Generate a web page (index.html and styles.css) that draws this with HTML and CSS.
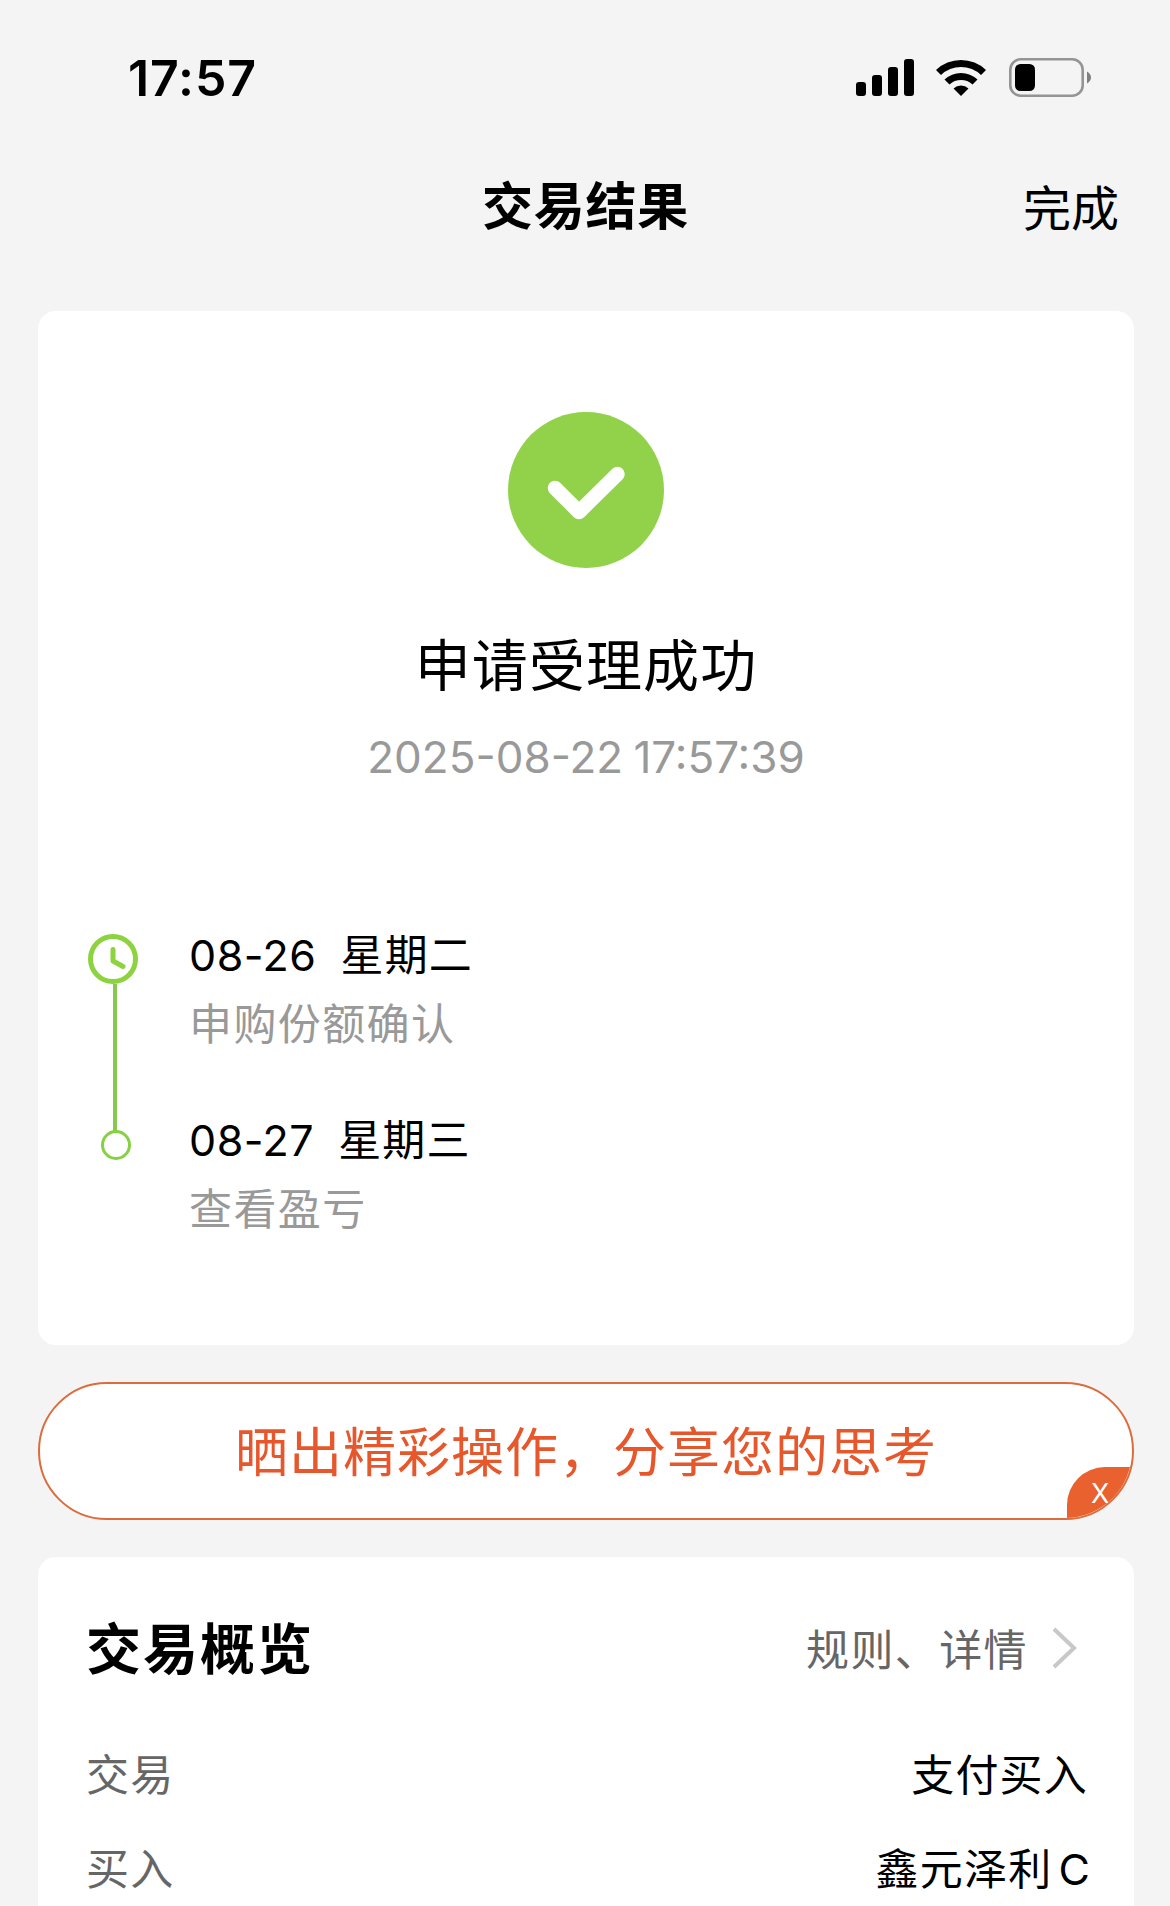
FILE: index.html
```html
<!DOCTYPE html>
<html lang="zh-CN">
<head>
    <meta charset="UTF-8">
    <title>交易结果</title>
    <link rel="stylesheet" href="styles.css">
</head>
<body>
    <div class="status-bar">
        <span class="time">17:57</span>
        <div class="status-icons">
            <svg class="signal" width="58" height="38" viewBox="0 0 58 38">
                <rect x="0" y="23" width="10" height="14" rx="3"/>
                <rect x="16" y="16" width="10" height="21" rx="3"/>
                <rect x="32" y="8" width="10" height="29" rx="3"/>
                <rect x="48" y="0" width="10" height="37" rx="3"/>
            </svg>
            <svg class="wifi" width="50" height="38" viewBox="0 0 50 38">
                <path d="M0 11 A36 36 0 0 1 50 11 L45 16 A29 29 0 0 0 5 16 Z"/>
                <path d="M8.500 20.500 A24 24 0 0 1 41.500 20.500 L36.500 25.500 A17 17 0 0 0 13.500 25.500 Z"/>
                <path d="M17.500 29.500 A11 11 0 0 1 32.500 29.500 L25 37 Z"/>
            </svg>
            <svg class="battery" width="83" height="39" viewBox="0 0 83 39">
                <rect x="1.300" y="1.300" width="72.400" height="36.400" rx="10.500" fill="none" stroke="#949494" stroke-width="2.600"/>
                <rect x="6" y="6" width="20" height="27" rx="5.500"/>
                <path d="M78 13.500 Q82 16 82 19.500 Q82 23 78 25.500 Z" fill="#808080"/>
            </svg>
        </div>
    </div>

    <div class="nav-bar">
        <h1>交易结果</h1>
        <a class="done">完成</a>
    </div>

    <div class="card result">
        <svg class="success-icon" width="156" height="156" viewBox="0 0 156 156">
            <circle cx="78" cy="78" r="78" fill="#92d24a"/>
            <path d="M47 76 L71 100 L109.500 62" fill="none" stroke="#fff" stroke-width="14.500" stroke-linecap="round" stroke-linejoin="round"/>
        </svg>
        <h2>申请受理成功</h2>
        <p class="datetime">2025-08-22 17:57:39</p>

        <div class="timeline">
            <div class="step">
                <div class="marker">
                    <svg width="50" height="50" viewBox="0 0 50 50">
                        <circle cx="25" cy="25" r="22.500" fill="none" stroke="#8cd33f" stroke-width="5"/>
                        <path d="M25 15.500 V27 L35 32.500" fill="none" stroke="#8cd33f" stroke-width="5" stroke-linecap="round" stroke-linejoin="round"/>
                    </svg>
                    <i class="line"></i>
                </div>
                <div class="step-text">
                    <p class="day"><span>08-26</span>星期二</p>
                    <p class="desc">申购份额确认</p>
                </div>
            </div>
            <div class="step">
                <div class="marker">
                    <i class="dot"></i>
                </div>
                <div class="step-text">
                    <p class="day"><span>08-27</span>星期三</p>
                    <p class="desc">查看盈亏</p>
                </div>
            </div>
        </div>
    </div>

    <div class="share">
        <span class="share-text">晒出精彩操作，分享您的思考</span>
        <a class="close">X</a>
    </div>

    <div class="card overview">
        <div class="overview-head">
            <h3>交易概览</h3>
            <a class="rules">规则、详情
                <svg width="26" height="42" viewBox="0 0 26 42">
                    <path d="M2 2 L22 21 L2 40" fill="none" stroke="#c8c8c8" stroke-width="4"/>
                </svg>
            </a>
        </div>
        <div class="row">
            <span class="label">交易</span>
            <span class="value">支付买入</span>
        </div>
        <div class="row">
            <span class="label">买入</span>
            <span class="value">鑫元泽利<span class="latin">C</span></span>
        </div>
    </div>
</body>
</html>
```

FILE: styles.css
```css
* {
    box-sizing: border-box;
}
body {
    margin: 0;
    height: 1906px;
    overflow: hidden;
    background: #f4f4f4;
    color: #000;
    font-family: Inter, "Noto Sans CJK SC", sans-serif;
}
h1, h2, h3, p {
    margin: 0;
    font-weight: normal;
}
svg {
    display: block;
    flex-shrink: 0;
}

/* status bar */
.status-bar {
    display: flex;
    justify-content: space-between;
    align-items: center;
    height: 156px;
    padding: 0 78px 0 128px;
}
.time {
    font-size: 50px;
    font-weight: 600;
    letter-spacing: 0.9px;
    line-height: 60px;
}
.status-icons {
    display: flex;
    align-items: center;
}
.wifi {
    margin-left: 22px;
}
.battery {
    margin-left: 23px;
    margin-top: -1px;
}

/* title */
.nav-bar {
    display: grid;
    grid-template-columns: 1fr auto 1fr;
    align-items: center;
    height: 100px;
    padding: 2px 51px 0 52px;
}
.nav-bar h1 {
    grid-column: 2;
    font-size: 51px;
    font-weight: 700;
    letter-spacing: 0.7px;
    line-height: 76px;
}
.done {
    justify-self: end;
    padding-top: 4px;
    font-size: 48px;
    line-height: 72px;
}

.card {
    margin: 0 36px 0 38px;
    background: #fff;
    border-radius: 18px;
}

/* result */
.result {
    display: flex;
    flex-direction: column;
    align-items: center;
    height: 1034px;
    margin-top: 55px;
    padding-top: 101px;
}
.result h2 {
    margin-top: 58px;
    font-size: 56px;
    letter-spacing: 1.1px;
    line-height: 80px;
}
.datetime {
    margin-top: 26px;
    color: #999;
    font-size: 44px;
    line-height: 50px;
    word-spacing: -2px;
}
.timeline {
    align-self: stretch;
    margin-top: 139px;
    padding-left: 50px;
}
.step {
    display: flex;
    height: 185px;
}
.marker {
    display: flex;
    flex-direction: column;
    align-items: center;
    width: 50px;
    margin-right: 51px;
    padding-top: 13px;
}
.line {
    flex-shrink: 0;
    width: 4px;
    height: 147px;
    margin-left: 4px;
    background: #86c94e;
}
.dot {
    width: 30px;
    height: 30px;
    margin: 11px 0 0 5px;
    border: 3px solid #86d042;
    border-radius: 50%;
}
.step-text {
    line-height: 68px;
}
.day {
    font-size: 43px;
    letter-spacing: 1.2px;
}
.day span {
    margin-right: 24px;
    letter-spacing: 0.5px;
}
.desc {
    padding-top: 1px;
    color: #999;
    font-size: 43px;
    letter-spacing: 1.4px;
}

/* share button */
.share {
    display: flex;
    justify-content: center;
    align-items: center;
    position: relative;
    height: 138px;
    margin: 37px 36px 37px 38px;
    overflow: hidden;
    border: 2px solid #dd6c3c;
    border-radius: 69px;
    background: #fff;
    color: #e6572b;
    font-size: 53px;
    letter-spacing: 1px;
}
.share-text {
    padding-bottom: 5px;
}
.close {
    position: absolute;
    right: -2px;
    bottom: -2px;
    width: 67px;
    height: 53px;
    padding-left: 24px;
    border-top-left-radius: 38px;
    background: #e8612f;
    color: #fff;
    font-size: 27px;
    line-height: 53px;
    letter-spacing: 0;
}

/* overview */
.overview {
    height: 400px;
    padding: 41px 46px 0 48px;
}
.overview-head {
    display: flex;
    justify-content: space-between;
    align-items: center;
    height: 94px;
    margin-bottom: 33px;
}
.overview-head h3 {
    font-size: 55px;
    font-weight: 700;
    letter-spacing: 2px;
}
.rules {
    display: flex;
    align-items: center;
    margin-right: 10px;
    padding-top: 3px;
    color: #666;
    font-size: 43px;
    letter-spacing: 1.4px;
}
.rules svg {
    margin: 2px 0 0 24px;
}
.row {
    display: flex;
    justify-content: space-between;
    align-items: center;
    height: 94px;
    font-size: 43px;
    letter-spacing: 1.2px;
    white-space: nowrap;
}
.label {
    color: #666;
}
.latin {
    margin-left: 6px;
    margin-right: -3px;
}
```
